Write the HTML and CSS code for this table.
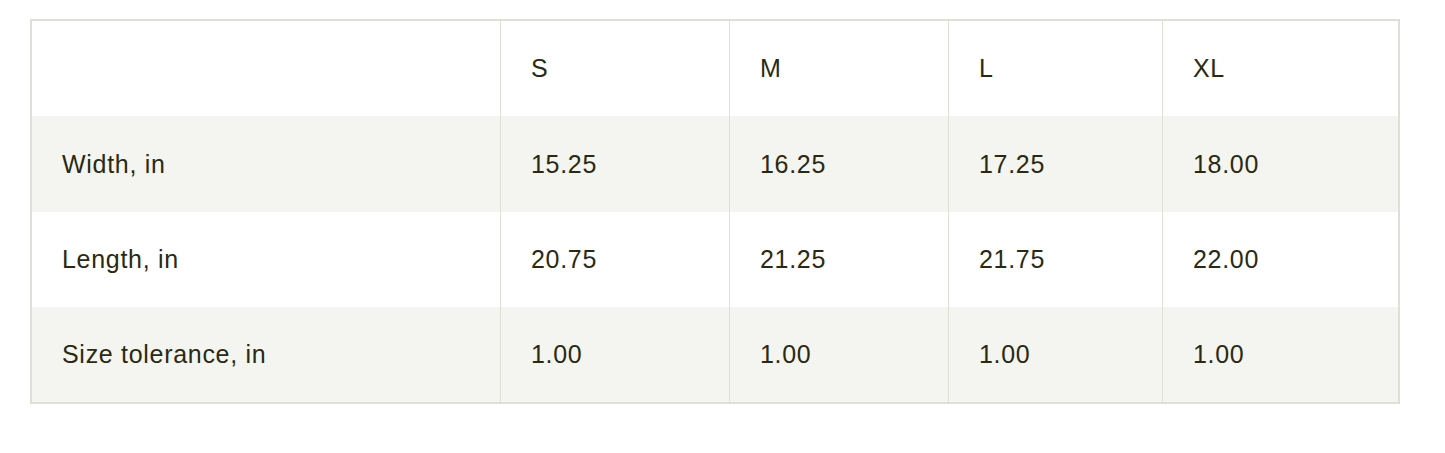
FILE: index.html
```html
<!DOCTYPE html>
<html lang="en">
<head>
<meta charset="utf-8">
<title>Size chart</title>
<link rel="stylesheet" href="styles.css">
</head>
<body>
<div class="page">
  <div class="chart">
    <table class="size-table">
      <colgroup>
        <col class="c-label">
        <col class="c-s">
        <col class="c-m">
        <col class="c-l">
        <col class="c-xl">
      </colgroup>
      <thead>
        <tr>
          <th></th>
          <th>S</th>
          <th>M</th>
          <th>L</th>
          <th>XL</th>
        </tr>
      </thead>
      <tbody>
        <tr class="alt first">
          <td>Width, in</td>
          <td>15.25</td>
          <td>16.25</td>
          <td>17.25</td>
          <td>18.00</td>
        </tr>
        <tr>
          <td>Length, in</td>
          <td>20.75</td>
          <td>21.25</td>
          <td>21.75</td>
          <td>22.00</td>
        </tr>
        <tr class="alt">
          <td>Size tolerance, in</td>
          <td>1.00</td>
          <td>1.00</td>
          <td>1.00</td>
          <td>1.00</td>
        </tr>
      </tbody>
    </table>
  </div>
</div>
</body>
</html>
```
FILE: styles.css
```css
html, body {
  margin: 0;
  padding: 0;
  background: #ffffff;
}

.page {
  padding: 19px 45px 0 30px;
}

.chart {
  width: 1370px;
  box-sizing: border-box;
  border: 2px solid #dfdfd6;
}

.size-table {
  width: 1366px;
  table-layout: fixed;
  border-collapse: separate;
  border-spacing: 0;
  font-family: "Liberation Sans", Arial, sans-serif;
  font-size: 25px;
  letter-spacing: 0.7px;
  color: #2a2a12;
}

.c-label { width: 468px; }
.c-s { width: 229px; }
.c-m { width: 219px; }
.c-l { width: 214px; }
.c-xl { width: 236px; }

.size-table th,
.size-table td {
  box-sizing: border-box;
  height: 95px;
  padding: 0 0 0 30px;
  text-align: left;
  vertical-align: middle;
  font-weight: 400;
  border-left: 1px solid #dfdfd6;
}

.size-table tr.first td {
  height: 96px;
}

.size-table th:first-child,
.size-table td:first-child {
  border-left: none;
}

.size-table tr.alt td {
  background: #f4f4f0;
}
```
